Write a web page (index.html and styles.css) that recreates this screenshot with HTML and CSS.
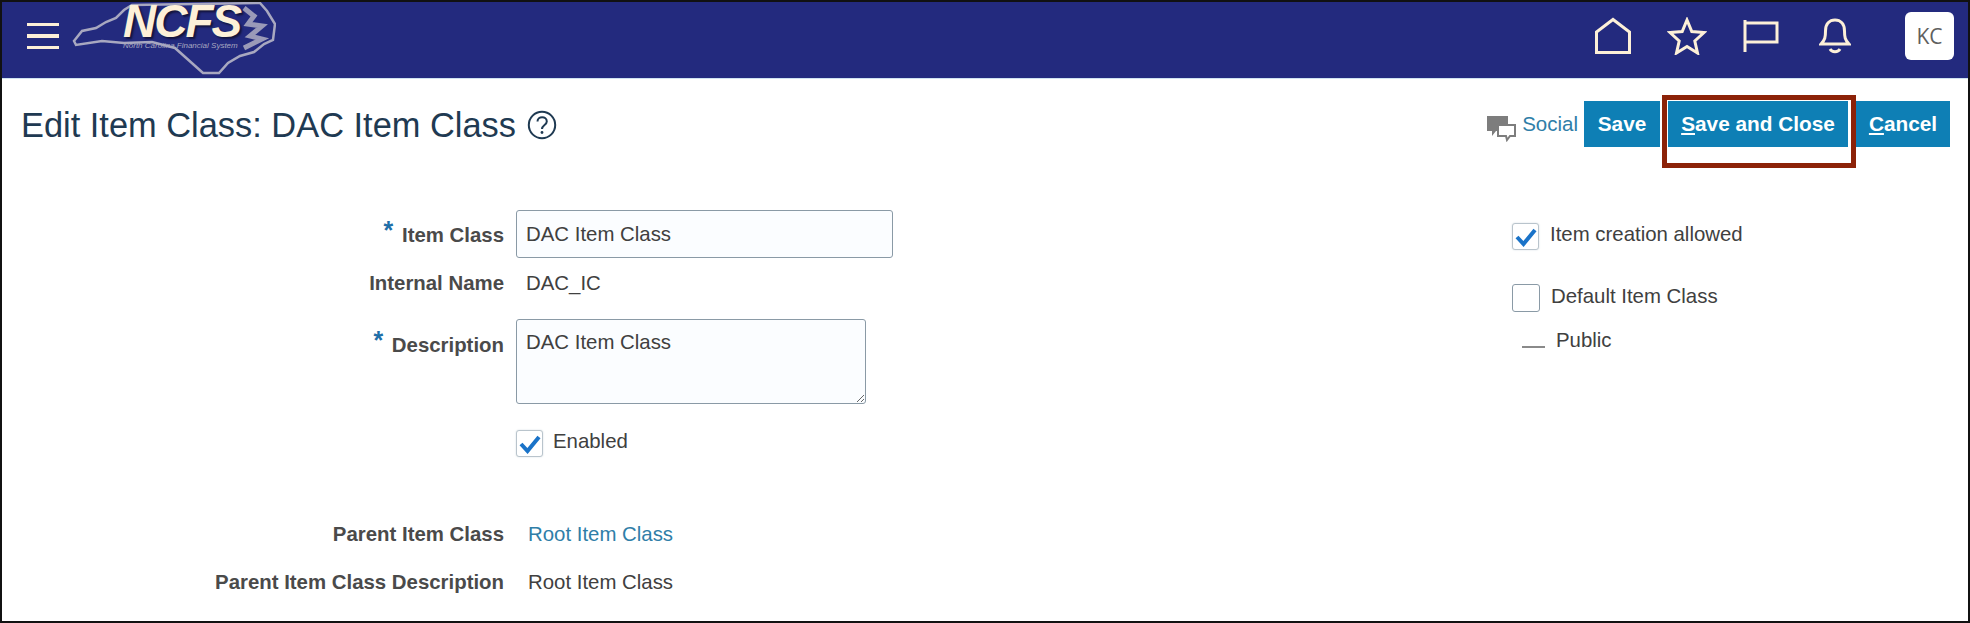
FILE: index.html
```html
<!DOCTYPE html>
<html lang="en">
<head>
  <meta charset="UTF-8">
  <title>Edit Item Class</title>
  <link rel="stylesheet" href="styles.css">
</head>
<body>
  <div class="page">
    <!-- Top bar -->
    <header class="topbar">
      <button class="menu-btn" aria-label="Menu"><span></span><span></span><span></span></button>
      <div class="logo">
        <svg class="logo-map" width="204" height="76" viewBox="0 0 204 76">
          <path d="M2 39 L10 29 L24 26 L34 20 L44 16 L52 8 L60 3 L188 1 L195 9 L203 22 L201 38 L192 42 L182 50 L168 54 L156 61 L147 71 L131 71 L103 46 L80 40 L52 41 L30 39 L4 43 Z" />
          <path class="coast" d="M172 6 L182 14 L176 22 L190 24 L178 34 L190 37 L172 46" />
        </svg>
        <span class="logo-name">NCFS</span>
        <span class="logo-sub">North Carolina Financial System</span>
      </div>
      <nav class="top-icons">
        <svg class="home-icon" width="38" height="38" viewBox="0 0 38 38"><path d="M2.5 35.5 V15 L19 2.5 L35.5 15 V35.5 Z" /></svg>
        <svg class="star-icon" width="40" height="38" viewBox="0 0 40 38"><path d="M20 3 L24.8 14.5 L37 15.5 L27.8 24 L30.5 36 L20 29.5 L9.5 36 L12.2 24 L3 15.5 L15.2 14.5 Z" /></svg>
        <svg class="flag-icon" width="36" height="36" viewBox="0 0 36 36"><path d="M2 34 V2 M2 5 H34 V24 H2" /></svg>
        <svg class="bell-icon" width="32" height="36" viewBox="0 0 32 36"><path d="M2 26 C6 22 6.5 19 6.5 13 C6.5 6 10.5 2 16 2 C21.5 2 25.5 6 25.5 13 C25.5 19 26 22 30 26 Z M11 31 C13 34.5 19 34.5 21 31" /></svg>
        <div class="avatar">KC</div>
      </nav>
    </header>

    <!-- Title and actions -->
    <div class="title-bar">
      <h1>Edit Item Class: DAC Item Class</h1>
      <svg class="help-icon" width="30" height="30" viewBox="0 0 30 30">
        <circle cx="15" cy="15" r="13.2" />
        <path d="M10.5 11.5 C10.5 5.8 19.8 5.8 19.8 11.5 C19.8 15 15 15 15 19" />
        <circle class="dot" cx="15" cy="22.5" r="1.4" />
      </svg>
      <div class="actions">
        <a class="social" href="#">
          <svg width="30" height="26" viewBox="0 0 30 26">
            <path class="bubble-back" d="M0 0 H21 V15 H9 L5 20 V15 H0 Z" />
            <path class="bubble-front" d="M11 9 H28 V20 H23 L20 24 L19 20 H11 Z" />
          </svg>
          Social
        </a>
        <button class="btn btn-save">Save</button>
        <button class="btn btn-close"><u>S</u>ave and Close</button>
        <button class="btn btn-cancel"><u>C</u>ancel</button>
        <div class="highlight"></div>
      </div>
    </div>

    <!-- Form -->
    <main class="form">
      <section class="form-left">
        <div class="row row-item">
          <label class="req-label"><span class="star">*</span> Item Class</label>
          <input class="text-input" type="text" value="DAC Item Class">
        </div>
        <div class="row row-name">
          <label>Internal Name</label>
          <span class="value">DAC_IC</span>
        </div>
        <div class="row row-desc">
          <label class="req-label"><span class="star">*</span> Description</label>
          <textarea class="text-area">DAC Item Class</textarea>
        </div>
        <div class="row row-enabled">
          <label></label>
          <span class="check checked">
            <svg width="22" height="20" viewBox="0 0 22 20"><path d="M2 10 L8.5 17 L20 3" /></svg>
          </span>
          <span class="check-text">Enabled</span>
        </div>
        <div class="row row-parent">
          <label>Parent Item Class</label>
          <a class="value link" href="#">Root Item Class</a>
        </div>
        <div class="row row-parent-desc">
          <label>Parent Item Class Description</label>
          <span class="value plain">Root Item Class</span>
        </div>
      </section>

      <section class="form-right">
        <div class="opt opt-allowed">
          <span class="check checked">
            <svg width="22" height="20" viewBox="0 0 22 20"><path d="M2 10 L8.5 17 L20 3" /></svg>
          </span>
          <span class="check-text">Item creation allowed</span>
        </div>
        <div class="opt opt-default">
          <span class="check empty"></span>
          <span class="check-text">Default Item Class</span>
        </div>
        <div class="opt opt-public">
          <span class="dash"></span>
          <span class="check-text">Public</span>
        </div>
      </section>
    </main>
  </div>
</body>
</html>
```
FILE: styles.css
```css
/* General Styling */
* {
  box-sizing: border-box;
}

body {
  margin: 0;
  font-family: "Liberation Sans", Arial, sans-serif;
  background: #fff;
}

.page {
  width: 1970px;
  height: 623px;
  border: 2px solid #111;
  overflow: hidden;
}

/* Top bar */
.topbar {
  display: flex;
  align-items: center;
  height: 77px;
  padding-bottom: 8px;
  background: #232a7e;
  border-bottom: 1px solid #cfe3f2;
}

.menu-btn {
  display: flex;
  flex-direction: column;
  gap: 8px;
  width: 32px;
  margin-left: 25px;
  padding: 0;
  border: none;
  background: none;
}

.menu-btn span {
  height: 3.5px;
  background: #fdf0d8;
}

.logo {
  position: relative;
  align-self: flex-start;
  width: 204px;
  height: 75px;
  margin-left: 13px;
}

.logo-map {
  display: block;
}

.logo-map path {
  fill: none;
  stroke: #a8a8c0;
  stroke-width: 2.5;
}

.logo-map .coast {
  stroke-width: 5;
  stroke: #9a9ab8;
}

.logo-name {
  position: absolute;
  left: 51px;
  top: 3px;
  font-size: 46px;
  line-height: 32px;
  font-weight: bold;
  font-style: italic;
  letter-spacing: -2px;
  color: #fdf0d8;
  text-shadow: 2px 2px 2px #14143c;
}

.logo-sub {
  position: absolute;
  left: 51px;
  top: 39px;
  font-size: 8px;
  font-style: italic;
  white-space: nowrap;
  color: #a8a8c0;
}

.top-icons {
  display: flex;
  align-items: center;
  margin-left: auto;
}

.top-icons svg {
  fill: none;
  stroke: #fdf0d8;
  stroke-width: 3;
}

.home-icon {
  margin-right: 35px;
}

.star-icon {
  margin-right: 36px;
}

.flag-icon {
  margin-right: 40px;
}

.bell-icon {
  margin-right: 54px;
}

.avatar {
  width: 49px;
  height: 48px;
  margin-right: 14px;
  border-radius: 6px;
  background: #fff;
  color: #5f5f5f;
  font-family: "Open Sans", sans-serif;
  font-size: 21px;
  line-height: 48px;
  text-align: center;
}

/* Title and actions */
.title-bar {
  display: flex;
  align-items: flex-start;
  height: 131px;
  padding: 22px 18px 0 19px;
}

h1 {
  margin: 4px 0 0;
  font-size: 34.4px;
  line-height: 40px;
  font-weight: normal;
  color: #1f3a52;
}

.help-icon {
  margin: 9px 0 0 11px;
}

.help-icon circle,
.help-icon path {
  fill: none;
  stroke: #1f3a52;
  stroke-width: 2;
}

.help-icon .dot {
  fill: #1f3a52;
  stroke: none;
}

.actions {
  position: relative;
  display: flex;
  align-items: flex-start;
  margin-left: auto;
}

.social {
  display: flex;
  align-items: center;
  gap: 5px;
  height: 46px;
  margin-right: 6px;
  font-size: 20.5px;
  color: #2f7ea8;
  text-decoration: none;
}

.social svg {
  margin-top: 10px;
}

.bubble-back {
  fill: #7d7d7d;
}

.bubble-front {
  fill: #fff;
  stroke: #7d7d7d;
  stroke-width: 2;
}

.btn {
  height: 46px;
  padding: 0;
  border: none;
  background: #0e7fb5;
  color: #fff;
  font-family: "Liberation Sans", Arial, sans-serif;
  font-size: 20.8px;
  font-weight: bold;
}

.btn-save {
  width: 76px;
}

.btn-close {
  width: 180px;
  margin-left: 8px;
}

.btn-cancel {
  width: 94px;
  margin-left: 8px;
}

/* Red annotation box round Save and Close */
.highlight {
  position: absolute;
  right: 94px;
  top: -6px;
  width: 194px;
  height: 73px;
  border: 5.5px solid #8c2208;
}

/* Form */
.form {
  display: flex;
  justify-content: space-between;
}

.row {
  display: flex;
  align-items: center;
}

.row label {
  flex: none;
  width: 502px;
  margin-right: 12px;
  font-size: 20.4px;
  font-weight: bold;
  color: #4a4a4a;
  text-align: right;
}

.star {
  margin-right: 3px;
  color: #1f6fa8;
  font-size: 25px;
  line-height: 18px;
  vertical-align: 3px;
}

.value {
  margin-left: 10px;
  font-size: 20.4px;
  color: #404040;
}

.value.link,
.value.plain {
  margin-left: 12px;
}

.link {
  color: #2f7ea8;
  text-decoration: none;
}

.text-input,
.text-area {
  padding: 0 9px;
  border: 1.5px solid #8a9aa6;
  border-radius: 3px;
  background: #fbfdff;
  color: #404040;
  font-family: "Liberation Sans", Arial, sans-serif;
  font-size: 20.4px;
}

.text-input {
  width: 377px;
  height: 48px;
}

.text-area {
  width: 350px;
  height: 85px;
  padding-top: 11px;
}

.row-item {
  height: 48px;
}

.row-name {
  height: 50px;
}

.row-desc {
  align-items: flex-start;
  margin-top: 11px;
}

.row-desc label {
  padding-top: 12px;
}

.row-enabled {
  margin-top: 26px;
}

.row-parent {
  height: 30px;
  margin-top: 62px;
}

.row-parent-desc {
  height: 30px;
  margin-top: 18px;
}

.check {
  display: flex;
  align-items: center;
  justify-content: center;
  flex: none;
  width: 27px;
  height: 27px;
  border: 1.5px solid #b9c4cc;
  border-radius: 3px;
  background: #fff;
  box-shadow: 0 0 2px #d5dde2;
}

.check svg {
  fill: none;
  stroke: #1a73c8;
  stroke-width: 4;
}

.check.empty {
  width: 28px;
  height: 28px;
  border-color: #8a9aa6;
  box-shadow: none;
}

.check-text {
  font-size: 20.4px;
  color: #404040;
}

.row-enabled .check-text {
  margin: -4px 0 0 10px;
}

/* Right column of options */
.form-right {
  width: 456px;
  padding-top: 13px;
}

.opt {
  display: flex;
  align-items: center;
}

.opt .check-text {
  margin: -4px 0 0 11px;
}

.opt-default {
  margin-top: 34px;
}

.opt-public {
  margin-top: 21px;
  padding-left: 10px;
}

.dash {
  width: 23px;
  height: 2px;
  margin-top: 8px;
  background: #8a8a8a;
}
```
